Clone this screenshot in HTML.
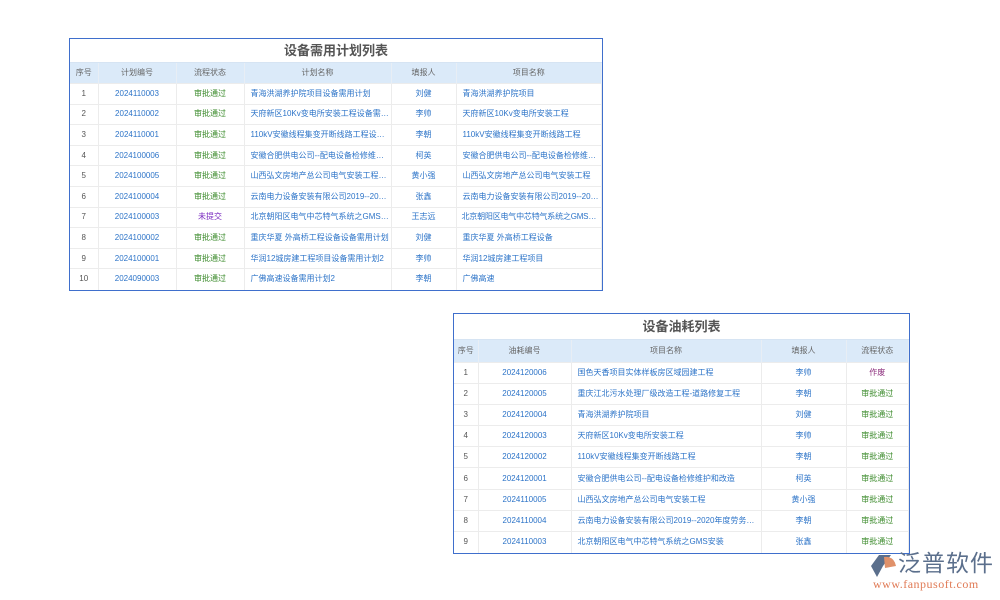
<!DOCTYPE html>
<html><head><meta charset="utf-8"><style>
body{margin:0;width:1000px;height:600px;background:#fff;position:relative;overflow:hidden;font-family:"Liberation Sans","Noto Sans CJK SC",sans-serif;}
.box{position:absolute;border:1px solid #3f6fcc;background:#fff;box-sizing:border-box;overflow:hidden;}
.title{text-align:center;font-weight:bold;color:#555;font-size:13px;border-bottom:1px solid #d6e4f3;box-sizing:border-box;}
table{border-collapse:collapse;table-layout:fixed;width:100%;font-size:8px;}
th,td{padding:0;line-height:10px;}
th{background:#dbeaf9;color:#666;font-weight:normal;border-right:1px solid #e8eef5;}
td{border-right:1px solid #ececec;border-top:1px solid #ececec;color:#555;text-align:center;white-space:nowrap;overflow:hidden;text-overflow:ellipsis;}
td.l{text-align:left;padding-left:6px;}
.b{color:#2d74c8}.g{color:#3a8a2a}.p{color:#7a2bc0}.m{color:#8a2a7a}
.t1 tr{height:20.6px}.t2 tr{height:21.2px}
</style></head><body>
<div class="box" style="left:69px;top:38px;width:534px;height:253px;">
<div class="title" style="height:24px;line-height:23px;">设备需用计划列表</div>
<table class="t1"><colgroup><col style="width:28px"><col style="width:78px"><col style="width:68px"><col style="width:147px"><col style="width:65px"><col></colgroup>
<tr><th>序号</th><th>计划编号</th><th>流程状态</th><th>计划名称</th><th>填报人</th><th>项目名称</th></tr>
<tr><td>1</td><td class="b">2024110003</td><td class="g">审批通过</td><td class="l b">青海洪湖养护院项目设备需用计划</td><td class="b">刘健</td><td class="l b">青海洪湖养护院项目</td></tr>
<tr><td>2</td><td class="b">2024110002</td><td class="g">审批通过</td><td class="l b">天府新区10Kv变电所安装工程设备需…</td><td class="b">李帅</td><td class="l b">天府新区10Kv变电所安装工程</td></tr>
<tr><td>3</td><td class="b">2024110001</td><td class="g">审批通过</td><td class="l b">110kV安徽线程集变开断线路工程设备…</td><td class="b">李朝</td><td class="l b">110kV安徽线程集变开断线路工程</td></tr>
<tr><td>4</td><td class="b">2024100006</td><td class="g">审批通过</td><td class="l b">安徽合肥供电公司--配电设备检修维护…</td><td class="b">柯英</td><td class="l b">安徽合肥供电公司--配电设备检修维护…</td></tr>
<tr><td>5</td><td class="b">2024100005</td><td class="g">审批通过</td><td class="l b">山西弘文房地产总公司电气安装工程设…</td><td class="b">黄小强</td><td class="l b">山西弘文房地产总公司电气安装工程</td></tr>
<tr><td>6</td><td class="b">2024100004</td><td class="g">审批通过</td><td class="l b">云南电力设备安装有限公司2019--2020…</td><td class="b">张鑫</td><td class="l b">云南电力设备安装有限公司2019--2020…</td></tr>
<tr><td>7</td><td class="b">2024100003</td><td class="p">未提交</td><td class="l b">北京朝阳区电气中芯特气系统之GMS…</td><td class="b">王志远</td><td class="l b" style="padding-left:5px;letter-spacing:-0.2px">北京朝阳区电气中芯特气系统之GMS安装</td></tr>
<tr><td>8</td><td class="b">2024100002</td><td class="g">审批通过</td><td class="l b">重庆华夏 外高桥工程设备设备需用计划</td><td class="b">刘健</td><td class="l b">重庆华夏 外高桥工程设备</td></tr>
<tr><td>9</td><td class="b">2024100001</td><td class="g">审批通过</td><td class="l b">华润12城房建工程项目设备需用计划2</td><td class="b">李帅</td><td class="l b">华润12城房建工程项目</td></tr>
<tr><td>10</td><td class="b">2024090003</td><td class="g">审批通过</td><td class="l b">广佛高速设备需用计划2</td><td class="b">李朝</td><td class="l b">广佛高速</td></tr>
</table></div>

<div class="box" style="left:453px;top:313px;width:457px;height:241px;">
<div class="title" style="height:26px;line-height:26px;">设备油耗列表</div>
<table class="t2"><colgroup><col style="width:24px"><col style="width:93px"><col style="width:190px"><col style="width:85px"><col></colgroup>
<tr style="height:22px"><th>序号</th><th>油耗编号</th><th>项目名称</th><th>填报人</th><th>流程状态</th></tr>
<tr><td>1</td><td class="b">2024120006</td><td class="l b">国色天香项目实体样板房区域园建工程</td><td class="b">李帅</td><td class="m">作废</td></tr>
<tr><td>2</td><td class="b">2024120005</td><td class="l b">重庆江北污水处理厂级改造工程-道路修复工程</td><td class="b">李朝</td><td class="g">审批通过</td></tr>
<tr><td>3</td><td class="b">2024120004</td><td class="l b">青海洪湖养护院项目</td><td class="b">刘健</td><td class="g">审批通过</td></tr>
<tr><td>4</td><td class="b">2024120003</td><td class="l b">天府新区10Kv变电所安装工程</td><td class="b">李帅</td><td class="g">审批通过</td></tr>
<tr><td>5</td><td class="b">2024120002</td><td class="l b">110kV安徽线程集变开断线路工程</td><td class="b">李朝</td><td class="g">审批通过</td></tr>
<tr><td>6</td><td class="b">2024120001</td><td class="l b">安徽合肥供电公司--配电设备检修维护和改造</td><td class="b">柯英</td><td class="g">审批通过</td></tr>
<tr><td>7</td><td class="b">2024110005</td><td class="l b">山西弘文房地产总公司电气安装工程</td><td class="b">黄小强</td><td class="g">审批通过</td></tr>
<tr><td>8</td><td class="b">2024110004</td><td class="l b">云南电力设备安装有限公司2019--2020年度劳务分…</td><td class="b">李朝</td><td class="g">审批通过</td></tr>
<tr><td>9</td><td class="b">2024110003</td><td class="l b">北京朝阳区电气中芯特气系统之GMS安装</td><td class="b">张鑫</td><td class="g">审批通过</td></tr>
</table></div>

<svg style="position:absolute;left:870px;top:553px" width="28" height="26" viewBox="0 0 28 26">
<path d="M9 2 L21 2 L13 13 L7 24 L1 13 Z" fill="#5b6f8c"/>
<path d="M14 4 Q24 3 26 13 L15 15 Z" fill="#e0916a"/>
</svg>
<div style="position:absolute;left:898px;top:550px;font-size:23px;color:#5b6f8c;letter-spacing:1px;line-height:27px;">泛普软件</div>
<div style="position:absolute;left:873px;top:577px;font-size:12px;color:#e07a55;font-family:'Liberation Serif',serif;letter-spacing:0.5px;">www.fanpusoft.com</div>
</body></html>
